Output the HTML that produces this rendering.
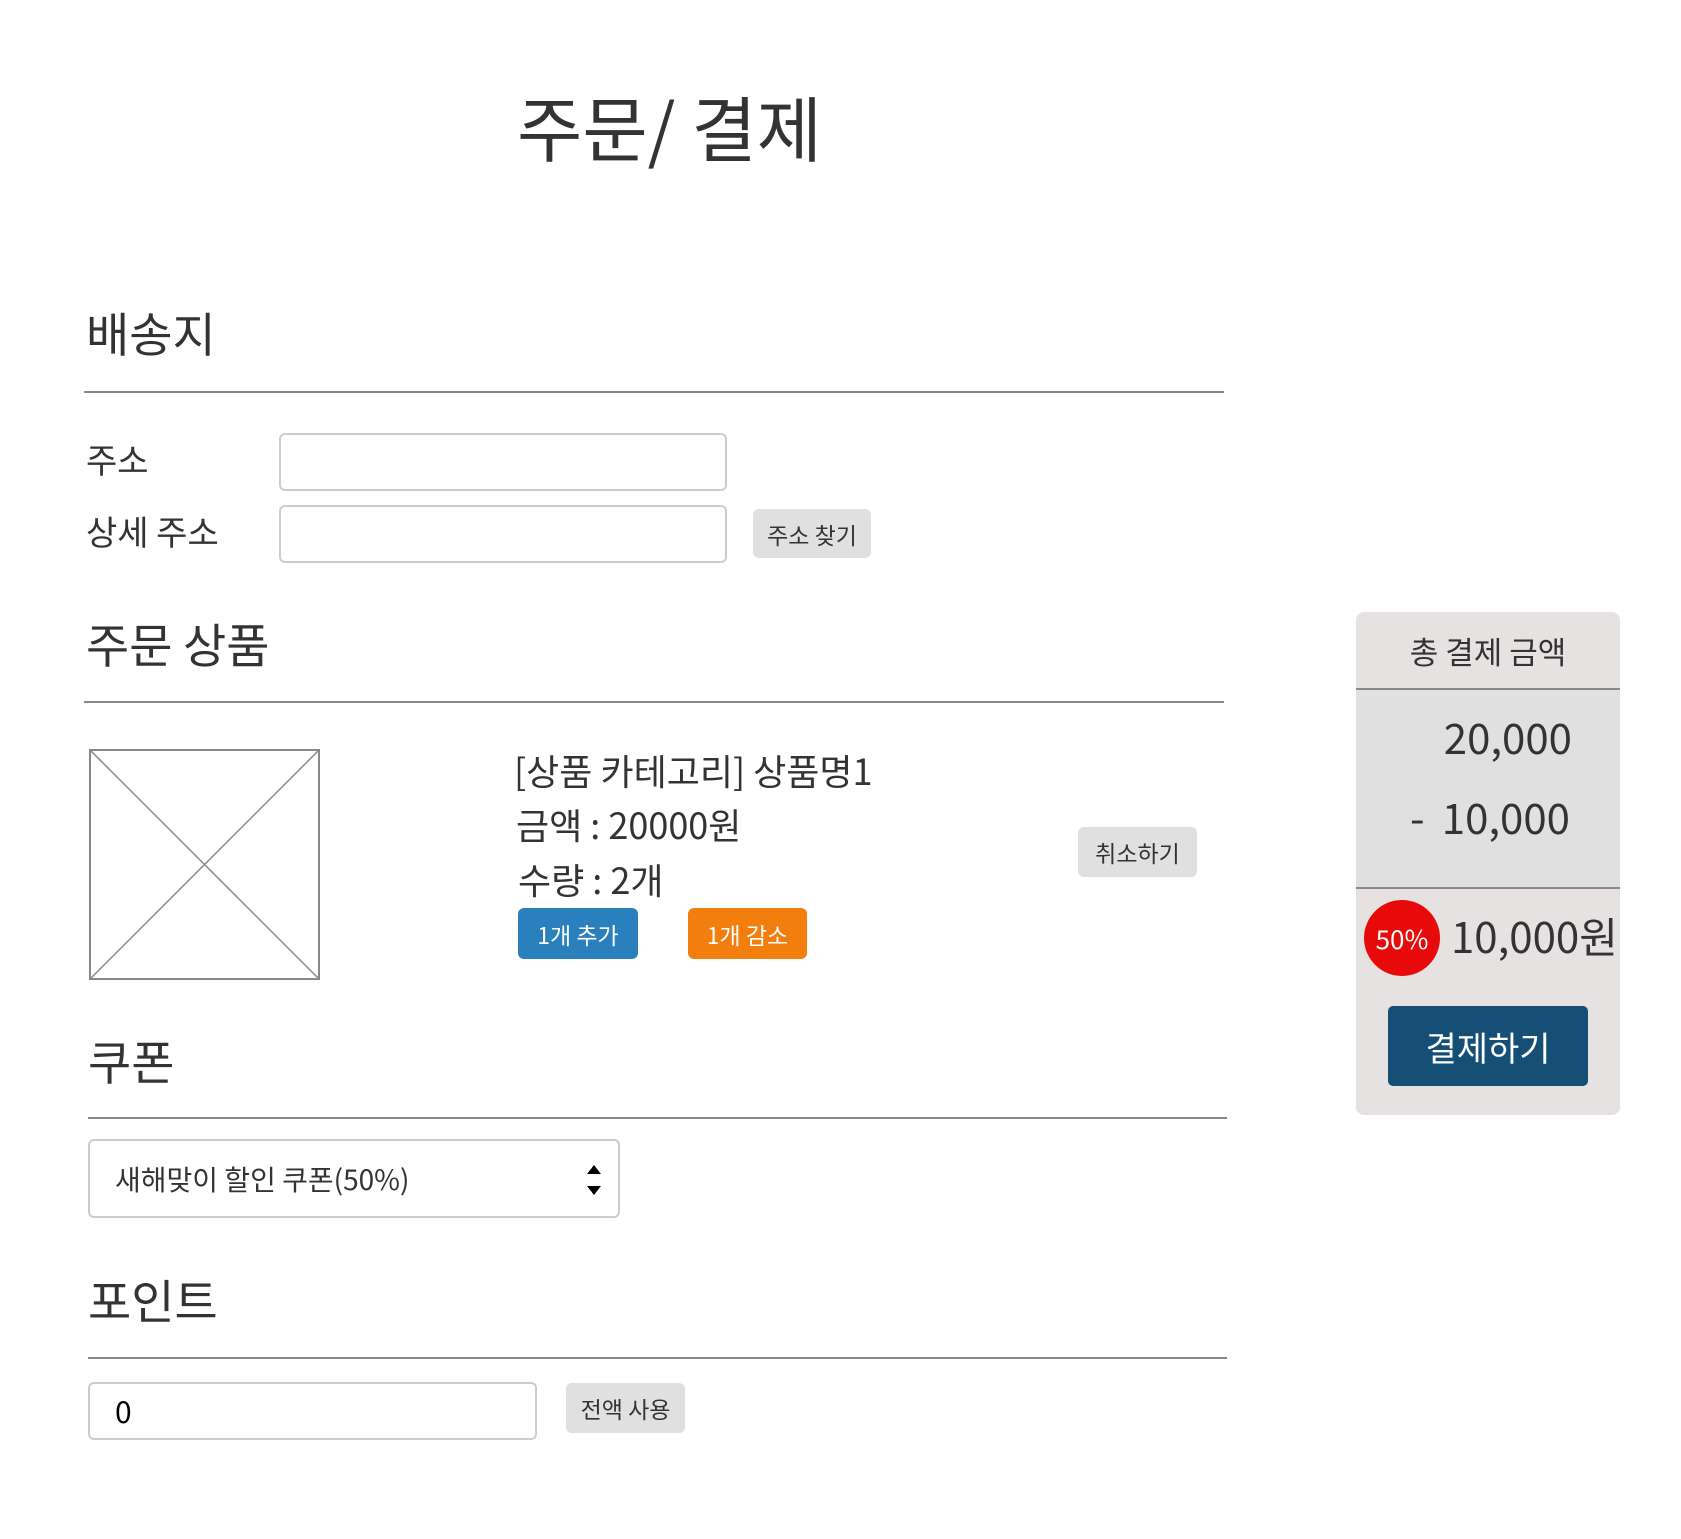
<!DOCTYPE html>
<html><head><meta charset="utf-8"><style>
body{margin:0;width:1681px;height:1539px;background:#fff;position:relative;overflow:hidden;font-family:"Noto Sans CJK KR","Liberation Sans",sans-serif;color:#333}
.a{position:absolute;white-space:nowrap}
.h{font-size:47px;line-height:1}
.line{position:absolute;height:2px;background:#888}
.inp{position:absolute;border:2px solid #ccc;border-radius:6px;box-sizing:border-box;background:#fff}
.btn{position:absolute;background:#e0e0e0;border-radius:6px;font-size:23px;display:flex;align-items:center;justify-content:center;color:#333}
</style></head><body>
<div class="a" style="left:517px;top:91px;font-size:71px;line-height:1">주문/ 결제</div>

<div class="a h" style="left:86px;top:308px">배송지</div>
<div class="line" style="left:84px;top:391px;width:1140px"></div>
<div class="a" style="left:86px;top:442px;font-size:34px;line-height:1">주소</div>
<div class="inp" style="left:279px;top:433px;width:448px;height:58px"></div>
<div class="a" style="left:86px;top:514px;font-size:34px;line-height:1">상세 주소</div>
<div class="inp" style="left:279px;top:505px;width:448px;height:58px"></div>
<div class="btn" style="left:753px;top:509px;width:118px;height:49px">주소 찾기</div>

<div class="a h" style="left:86px;top:619px">주문 상품</div>
<div class="line" style="left:84px;top:701px;width:1140px"></div>
<svg class="a" style="left:89px;top:749px" width="231" height="231"><rect x="1" y="1" width="229" height="229" fill="#fff" stroke="#888" stroke-width="2"/><path d="M1 1L230 230M230 1L1 230" stroke="#888" stroke-width="1.5"/></svg>
<div class="a" style="left:514px;top:752px;font-size:36px;line-height:1">[상품 카테고리] 상품명1</div>
<div class="a" style="left:516px;top:806px;font-size:36px;line-height:1">금액 : 20000원</div>
<div class="a" style="left:518px;top:861px;font-size:36px;line-height:1">수량 : 2개</div>
<div class="btn" style="left:518px;top:908px;width:120px;height:51px;background:#2a7fbd;color:#fff">1개 추가</div>
<div class="btn" style="left:688px;top:908px;width:119px;height:51px;background:#f27e0e;color:#fff">1개 감소</div>
<div class="btn" style="left:1078px;top:827px;width:119px;height:50px">취소하기</div>

<div class="a h" style="left:88px;top:1036px">쿠폰</div>
<div class="line" style="left:88px;top:1117px;width:1139px"></div>
<div class="inp" style="left:88px;top:1139px;width:532px;height:79px"></div>
<div class="a" style="left:115px;top:1165px;font-size:28px;line-height:1">새해맞이 할인 쿠폰(50%)</div>
<svg class="a" style="left:586px;top:1163px" width="16" height="34"><path d="M8 2L15 11H1Z M8 32L15 23H1Z" fill="#000"/></svg>

<div class="a h" style="left:88px;top:1275px">포인트</div>
<div class="line" style="left:88px;top:1357px;width:1139px"></div>
<div class="inp" style="left:88px;top:1382px;width:449px;height:58px"></div>
<div class="a" style="left:115px;top:1395px;font-size:30px;line-height:1;color:#000">0</div>
<div class="btn" style="left:566px;top:1383px;width:119px;height:50px">전액 사용</div>

<div class="a" style="left:1356px;top:612px;width:264px;height:503px;background:#e6e2e2;border-radius:8px"></div>
<div class="a" style="left:1356px;top:689px;width:264px;height:199px;background:#e0e0e0"></div>
<div class="line" style="left:1356px;top:688px;width:264px"></div>
<div class="line" style="left:1356px;top:887px;width:264px"></div>
<div class="a" style="left:1356px;top:635px;width:264px;text-align:center;font-size:31px;line-height:1">총 결제 금액</div>
<div class="a" style="left:1400px;top:716px;width:172px;text-align:right;font-size:42px;line-height:1">20,000</div>
<div class="a" style="left:1410px;top:796px;font-size:42px;line-height:1">-</div>
<div class="a" style="left:1400px;top:796px;width:170px;text-align:right;font-size:42px;line-height:1">10,000</div>
<div class="a" style="left:1364px;top:900px;width:76px;height:76px;border-radius:50%;background:#e80a0a;color:#fff;font-size:26px;display:flex;align-items:center;justify-content:center">50%</div>
<div class="a" style="left:1451px;top:915px;font-size:42px;line-height:1">10,000원</div>
<div class="a" style="left:1388px;top:1006px;width:200px;height:80px;background:#154f75;border-radius:5px;color:#fff;font-size:34px;display:flex;align-items:center;justify-content:center">결제하기</div>
</body></html>
